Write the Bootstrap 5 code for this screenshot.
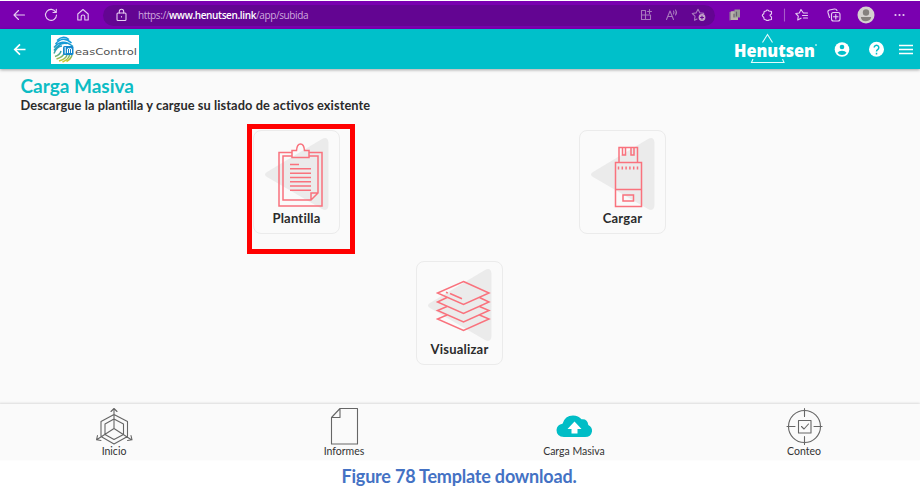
<!DOCTYPE html>
<html lang="es">
<head>
<meta charset="utf-8">
<meta name="viewport" content="width=device-width, initial-scale=1">
<title>Carga Masiva</title>
<link href="https://cdn.jsdelivr.net/npm/bootstrap@5.3.0/dist/css/bootstrap.min.css" rel="stylesheet">
<style>
body{font-family:Lato,"Liberation Sans",sans-serif;background:#fff;color:#2b2b2b;width:920px;height:493px;overflow:hidden}
svg{display:block;flex:none;overflow:visible}
.browser-bar{height:28px;margin-top:1px;background:#7a00b0;padding:0 13px 0 11px;color:#e6cdf1}
.browser-bar svg,.line-art{fill:none;stroke:currentColor;stroke-width:1.1;stroke-linecap:round;stroke-linejoin:round}
.address{width:612px;height:21px;background:#630592;border-radius:11px;padding:0 8px 0 10px;margin:0 12px}
.url{font:10px/20px "Open Sans","Noto Sans",sans-serif;letter-spacing:-.38px;color:#cfa9df;margin-left:9px;white-space:nowrap}
.url b{color:#fff;font-weight:600}
.dim{color:#a878bd}
.app-bar{height:40px;background:#00c0ca;box-shadow:0 1px 3px rgba(0,0,0,.35);padding:0 7px 0 13px;position:relative;color:#fff}
.brand-logo{background:#fff;margin-left:25px}
.screen{height:335px;background:#fafafa;padding:5px 0 0}
.page-title{font-size:19px;line-height:24px;font-weight:700;color:#0cbcc4;margin:0 0 0 20.5px}
.page-note{font-size:12.8px;line-height:14px;letter-spacing:.08px;font-weight:700;margin:0 0 0 20.5px}
.tiles{width:652px;margin:18px 0 0 134px}
.tile{width:87px;height:104px;border:1px solid #ebebeb;border-radius:8px;background:#fafafa;position:relative;left:-.5px}
.tile svg{margin:-1px 0 0 -1px}
.tile span{font-size:13px;line-height:18px;font-weight:700;letter-spacing:.2px;text-align:center;white-space:nowrap;margin-top:-1px}
.tile .line-art{color:#f9727d;stroke-width:1.5;stroke-linecap:butt;stroke-linejoin:miter}
.marked::after{content:"";position:absolute;left:-7px;top:-7px;width:108px;height:130px;border:5px solid #f00}
.bottom-nav{height:56px;background:#fafafa;box-shadow:0 -1px 2px rgba(0,0,0,.12);position:relative;margin-left:-1px;width:921px;color:#666}
.bottom-nav a{width:230px;color:inherit;text-decoration:none;padding-top:3px}
.bottom-nav span{font-size:10.5px;line-height:13px;color:#333}
.caption{font-size:18px;line-height:33px;letter-spacing:-.2px;font-weight:700;color:#4472c4;text-align:center;margin:0 2px 0 0}
</style>
<script src="https://cdn.jsdelivr.net/npm/bootstrap@5.3.0/dist/js/bootstrap.bundle.min.js"></script>
</head>
<body>
<div class="browser-bar d-flex align-items-center">
  <svg width="16" height="16"><path d="M13.500 8H3M7.500 3.500L3 8l4.500 4.500"/></svg>
  <svg width="16" height="16" class="ms-3"><path d="M12.800 5.200A5.500 5.500 0 1 0 13.500 8M13.300 2.200v3.300H10"/></svg>
  <svg width="16" height="16" class="ms-3"><path d="M2.800 7L8 2.500 13.200 7v6H9.800V9.800a1.800 1.800 0 0 0-3.600 0V13H2.800z"/></svg>
  <div class="address d-flex align-items-center">
    <svg width="16" height="16"><rect x="4" y="6" width="9" height="7.500" rx="1"/><path d="M6.300 6V4.500a2.200 2.200 0 0 1 4.400 0V6M8.500 9.500v.5"/></svg>
    <div class="url">https://<b>www.henutsen.link</b>/app/subida</div>
    <div class="d-flex ms-auto dim">
      <svg width="16" height="16"><path d="M3.500 3.500h4v9h-4zM3.500 8h9v4.500h-5M11.500 2.500v4M9.500 4.500h4"/></svg>
      <svg width="16" height="16" style="margin-left:10px"><path d="M2.500 12.500L6 4l3.500 8.500M3.800 9.500h4.500M9.500 4q1 1.500 0 3M11.500 3q2 2.500 0 5"/></svg>
      <svg width="16" height="16" style="margin-left:11px"><path d="M6 12l-2.500 1.300.5-4.100L1.300 6.500l3.800-.6L7 2.300l1.800 3.500 3.900.6-1 1"/><circle cx="11" cy="10.500" r="3.400" fill="#c3a5c9" stroke="none"/><path d="M9.500 10.500h3M11 9v3" stroke="#630592"/></svg>
    </div>
  </div>
  <svg width="16" height="16" style="stroke:none"><path fill="#8f8796" d="M2.500 5l5-1.500V12l-5 1.500z"/><path fill="#b9b2ab" d="M4 4.500h7v8.500H4z"/><path fill="#979a95" d="M7.500 2.500H13v8H7.500z"/><path d="M7 7v3M9.500 5v4" stroke="#665d6b"/></svg>
  <svg width="16" height="16" class="ms-3"><path d="M5.200 4.500L7 4q1-2 3 0l2.500.5v2.500q-3 1.200 0 3v2.500L10 13q-1.500 1-3 0l-1.800-.7-.5-2.100q-2.800-1.700 0-3.400z"/></svg>
  <svg width="1" height="12" style="margin-left:9px"><path d="M.5 0v12" stroke="#a85cc9"/></svg>
  <svg width="16" height="16" style="margin-left:9px"><path d="M9 5.500L7 2.500 5.300 6 1.800 6.500l2.500 2.600-.6 3.900L7 11.200M9.500 6h4M8.500 8.500h5M9.500 11h4"/></svg>
  <svg width="16" height="16" class="ms-3"><rect x="5.500" y="5.500" width="8.500" height="8.500" rx="2"/><path d="M9.800 7.500V12M7.500 9.800H12M3.500 10.500L2 5.500q-.5-2 1.500-2.500l5-1q1.800-.2 2.500 1.500"/></svg>
  <svg width="18" height="18" style="margin-left:15px;stroke:none"><circle cx="9" cy="9" r="8.500" fill="#d5d1cf"/><circle cx="9" cy="6.500" r="3.200" fill="#85817e"/><path fill="#85817e" d="M3.800 11h10.400q-.5 4-5.200 4.200T3.800 11z"/></svg>
  <svg width="16" height="16" class="ms-auto" style="stroke:none"><g fill="#e6cdf1"><circle cx="4.500" cy="8" r="1.100"/><circle cx="8.500" cy="8" r="1.100"/><circle cx="12.500" cy="8" r="1.100"/></g></svg>
</div>
<nav class="app-bar d-flex align-items-center">
  <svg width="13" height="14" fill="none" stroke="#fff" stroke-width="1.700"><path d="M12.500 7.500H2M7 2.300L1.800 7.500 7 12.700"/></svg>
  <svg class="brand-logo" width="88" height="29" viewBox="0 0 88 29" style="margin-top:1px">
    <defs><linearGradient id="print" gradientUnits="userSpaceOnUse" x1="0" y1="2" x2="0" y2="27"><stop offset=".2" stop-color="#159bdc"/><stop offset=".6" stop-color="#35a3a8"/><stop offset="1" stop-color="#d9cb1d"/></linearGradient></defs>
    <g fill="none" stroke="url(#print)" stroke-width="1.500"><path d="M6 5.500Q12-.5 18 4.500M4.500 9Q12 0 20.500 8M3 12.500Q11 2.500 22 11.500M3 15.500Q9 6.500 16 8.500M3 18.500Q6 11 11 11M4 21.500Q9 20 10 16M5.500 24Q12 22 13 18.500M8 26Q15 24 16 20M11.500 27Q18 24 18.500 20M15.500 26.500Q20 24 21 20"/></g>
    <rect x="12" y="11" width="10.500" height="9" rx="1.500" fill="#1487cd"/>
    <path d="M14.200 12v6.500M16.500 18v-4q1.700-1.500 2 0v4M18.500 14q1.700-1.500 2 0v4" fill="none" stroke="#fff" stroke-width="1"/>
    <text x="24" y="19.500" font-family="DejaVu Sans" font-size="8.800" fill="#505050" textLength="62" lengthAdjust="spacingAndGlyphs">easControl</text>
  </svg>
  <svg class="ms-auto" width="86" height="34" viewBox="732 33 86 34">
    <path d="M761.500 43.500L766.500 35.500 771.500 43.500M752 60L750.500 63.500H783L781.500 60" fill="none" stroke="#e2fbfc" stroke-width="1.100"/>
    <text x="733" y="57.500" font-family="Open Sans" font-weight="800" font-size="17.500" fill="#fff" textLength="81" lengthAdjust="spacingAndGlyphs">Henutsen</text>
    <path d="M814 46h2" stroke="#fff"/>
  </svg>
  <svg width="16" height="16" style="margin-left:15px"><circle cx="8" cy="8.500" r="7.300" fill="#fff"/><circle cx="8" cy="6" r="2.300" fill="#00c0ca"/><path d="M3.500 11.700q1.200-2 4.500-2t4.500 2Q11 14 8 14t-4.500-2.300z" fill="#00c0ca"/></svg>
  <svg width="16" height="16" style="margin-left:18px"><circle cx="8.500" cy="8.300" r="7.500" fill="#fff"/><path d="M6.200 6.600a2.300 2.300 0 1 1 3.500 2Q8.500 9.300 8.500 10.500M8.500 11.800v1.600" fill="none" stroke="#00c0ca" stroke-width="1.500"/></svg>
  <svg width="14" height="14" style="margin-left:15px"><path d="M0 3.500h14M0 7.500h14M0 11.500h14" stroke="#fff" stroke-width="1.500"/></svg>
</nav>
<main class="screen">
  <h1 class="page-title">Carga Masiva</h1>
  <p class="page-note">Descargue la plantilla y cargue su listado de activos existente</p>
  <div class="tiles">
    <div class="row g-0">
      <div class="col-6 d-flex justify-content-center">
        <div class="tile marked d-flex flex-column">
          <svg width="87" height="80" viewBox="253 130 87 80"><path d="M267 172L322 139Q328 136 328.500 143V205Q328 212 322 209L267 177Q263 174.500 267 172z" fill="#ebebeb"/>
          <g class="line-art"><path d="M291.500 152.500H279V206h43v-53.500h-12.500M291.500 156H283v44h28l7-7v-37h-8.500M311 200v-7h7M292 150.500h4.500q.5-6.500 4-6.500t4 6.500h4.500v7h-17zM290 164.500h9M290 168.800h21M290 173.200h21M290 177.500h21M290 181.700h21M290 186h21M290 190.200h21"/></g></svg>
          <span>Plantilla</span>
        </div>
      </div>
      <div class="col-6 d-flex justify-content-center">
        <div class="tile d-flex flex-column">
          <svg width="87" height="80" viewBox="579 130 87 80"><path d="M593 172L648 139Q654 136 654.500 143V205Q654 212 648 209L593 177Q589 174.500 593 172z" fill="#ebebeb"/>
          <g class="line-art"><path d="M615.500 162.500h26V206.500h-26zM615.500 189.500h26M619 162.500v-15h18.500v15M622.500 148v7h3v-7M631 148v7h3v-7M623 195h10.500v6H623z"/><path d="M618.500 166.500v3M622.300 166.500v3M626.100 166.500v3M629.900 166.500v3M633.700 166.500v3M637.500 166.500v3" /></g></svg>
          <span>Cargar</span>
        </div>
      </div>
    </div>
    <div class="d-flex justify-content-center" style="margin-top:27px">
      <div class="tile d-flex flex-column">
        <svg width="87" height="80" viewBox="416 261 87 80"><path d="M430 303L485 270Q491 267 491.500 274V336Q491 343 485 340L430 308Q426 305.500 430 303z" fill="#ebebeb"/>
        <g class="line-art"><path d="M463.500 281.500L489 293 463.500 304.500 437.500 293zM447 297.500L437.500 302 463.500 313.500 489 302 479.500 297.500M447 306.500L437.500 310.500 463.500 322 489 310.500 479.500 306.500M447 315L437.500 319 463.500 330.500 489 319 479.500 315M450 293.500l12 5.200M446 292.300l1.800.7"/></g></svg>
        <span>Visualizar</span>
      </div>
    </div>
  </div>
</main>
<nav class="bottom-nav d-flex">
  <a href="#" class="d-flex flex-column align-items-center">
    <svg class="line-art" width="38" height="38" viewBox="95 407 38 38"><path d="M114 414.500L127.500 421.500V436.500L114 444 101 436.500V421.500zM114 419L123.500 424V434.500L114 439.500 105 434.500V424zM114 428.500V409M111 411.500L114 408.500 117 411.500M114 428.500L97 439.500M97.500 435.500L96.500 439.800 101 440.500M114 428.500L131 439.500M131 435.500L132 439.800 127.500 440.500"/></svg>
    <span>Inicio</span></a>
  <a href="#" class="d-flex flex-column align-items-center">
    <svg class="line-art" width="38" height="38" viewBox="325 407 38 38"><path d="M340 408.500H357.500V444H331.500V417.500zM340 408.500V417.500H331.500"/></svg>
    <span>Informes</span></a>
  <a href="#" class="d-flex flex-column align-items-center">
    <svg width="38" height="38" viewBox="555 407 38 38"><path fill="#00bdc6" d="M564 437Q556.500 436.500 556.500 430 557 424.500 562.500 423.800 565 415.500 573 415.500 578.500 415.500 581.500 419.300 587.500 418.500 588.300 425 592.500 427 592 431.500 591 437 585 437z"/><path fill="#fff" d="M574.500 421.500L581.500 429H577.500V433.500H571.500V429H567.500z"/></svg>
    <span>Carga Masiva</span></a>
  <a href="#" class="d-flex flex-column align-items-center">
    <svg class="line-art" width="38" height="38" viewBox="785 407 38 38"><circle cx="804.500" cy="426.500" r="16"/><path d="M804.500 408.500v8M804.500 436.500v8M787 426.500h8M814 426.500h8M798.500 420.500h12.500v12.500h-12.500zM801.500 426.500l2.500 2.500 4.500-5"/></svg>
    <span>Conteo</span></a>
</nav>
<div class="caption">Figure 78 Template download.</div>
</body>
</html>
